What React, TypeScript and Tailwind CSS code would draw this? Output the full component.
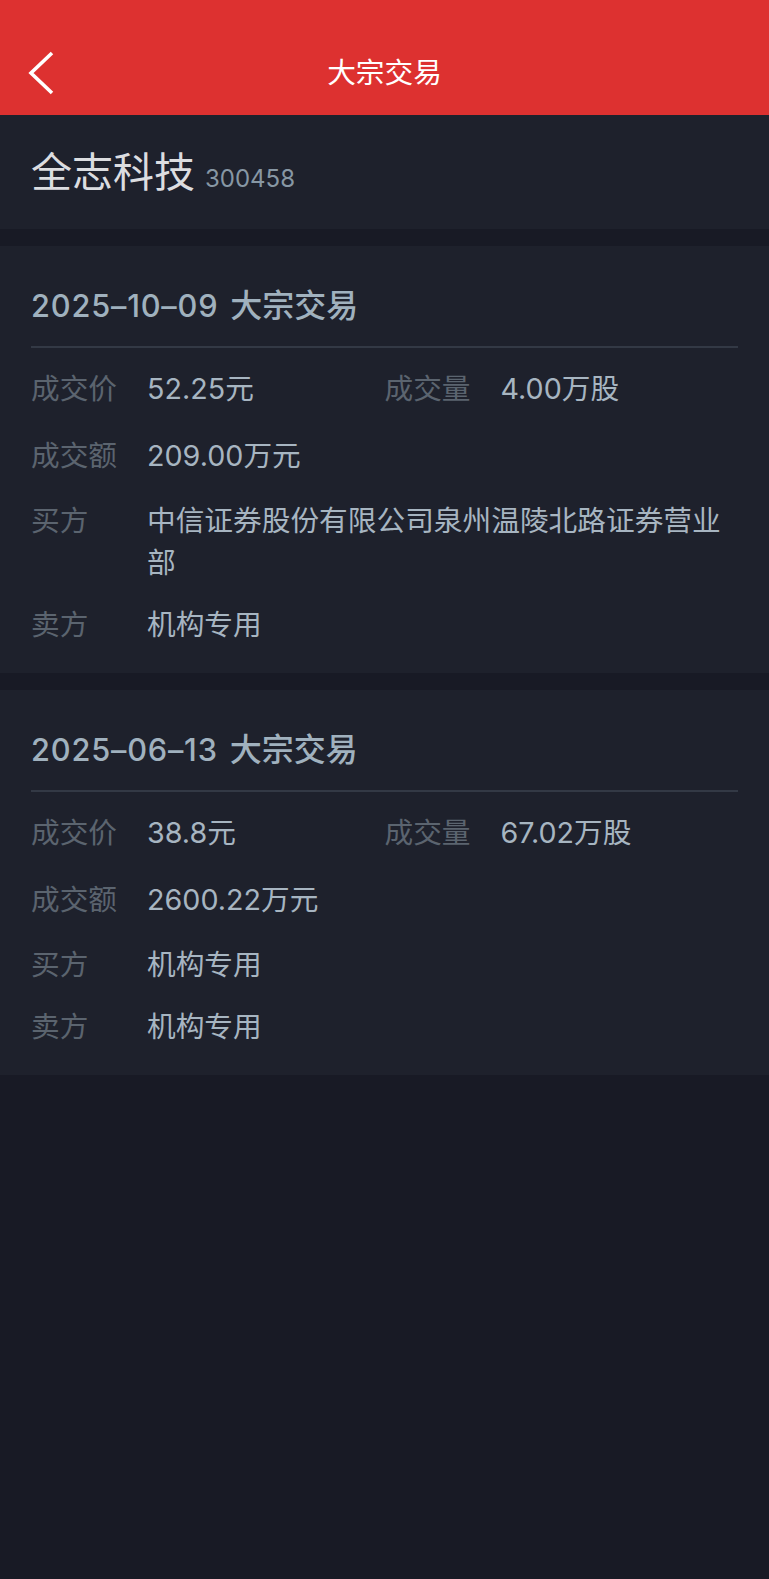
import React from "react";

type Trade = {
  date: string;
  price: string;
  volume: string;
  amount: string;
  buyer: string;
  seller: string;
};

const trades: Trade[] = [
  {
    date: "2025–10–09",
    price: "52.25元",
    volume: "4.00万股",
    amount: "209.00万元",
    buyer: "中信证券股份有限公司泉州温陵北路证券营业部",
    seller: "机构专用",
  },
  {
    date: "2025–06–13",
    price: "38.8元",
    volume: "67.02万股",
    amount: "2600.22万元",
    buyer: "机构专用",
    seller: "机构专用",
  },
];

function Field({ label, value }: { label: string; value: string }) {
  return (
    <div className="flex text-[28.7px] leading-[42px]">
      <div className="w-[116px] shrink-0 text-[#5b646f]">{label}</div>
      <div className="min-w-0 flex-1 text-[#a7b5c1]">{value}</div>
    </div>
  );
}

function TradeCard({ t }: { t: Trade }) {
  return (
    <div className="mt-[17px] bg-[#1e212c] px-[31px] pt-[40px] pb-[27px]">
      <div className="flex items-baseline text-[30.75px] leading-[40px] font-medium text-[#a0b1be]">
        <span className="tracking-[0.8px]">{t.date}</span>
        <span className="ml-[12px] text-[32px]">大宗交易</span>
      </div>
      <div className="mt-[20px] h-[2px] bg-[#333945]" />
      <div className="mt-[20px] grid grid-cols-2">
        <Field label="成交价" value={t.price} />
        <Field label="成交量" value={t.volume} />
      </div>
      <div className="mt-[25px]">
        <Field label="成交额" value={t.amount} />
      </div>
      <div className="mt-[23px]">
        <Field label="买方" value={t.buyer} />
      </div>
      <div className="mt-[20px]">
        <Field label="卖方" value={t.seller} />
      </div>
    </div>
  );
}

export default function App() {
  return (
    <div className="min-h-screen bg-[#181a25] font-['Inter','Noto_Sans_CJK_SC',sans-serif]">
      <header className="grid h-[115px] grid-cols-[1fr_auto_1fr] items-center bg-[#dd3130] pt-[31px]">
        <div className="flex items-center pl-[26px]">
          <svg width="30" height="44" viewBox="0 0 30 44" fill="none">
            <polyline
              points="26,2 5,22 26,42"
              stroke="#ffffff"
              strokeWidth="3.6"
              strokeLinecap="butt"
              strokeLinejoin="miter"
            />
          </svg>
        </div>
        <div className="text-[28.7px] leading-[40px] text-white">大宗交易</div>
        <div />
      </header>

      <section className="flex h-[114px] items-center bg-[#1e212c] px-[31px]">
        <div className="flex items-baseline">
          <span className="text-[41px] leading-[50px] text-[#dcdde0]">全志科技</span>
          <span className="ml-[10px] text-[24px] text-[#8797a4]">300458</span>
        </div>
      </section>

      {trades.map((t) => (
        <TradeCard key={t.date} t={t} />
      ))}
    </div>
  );
}
